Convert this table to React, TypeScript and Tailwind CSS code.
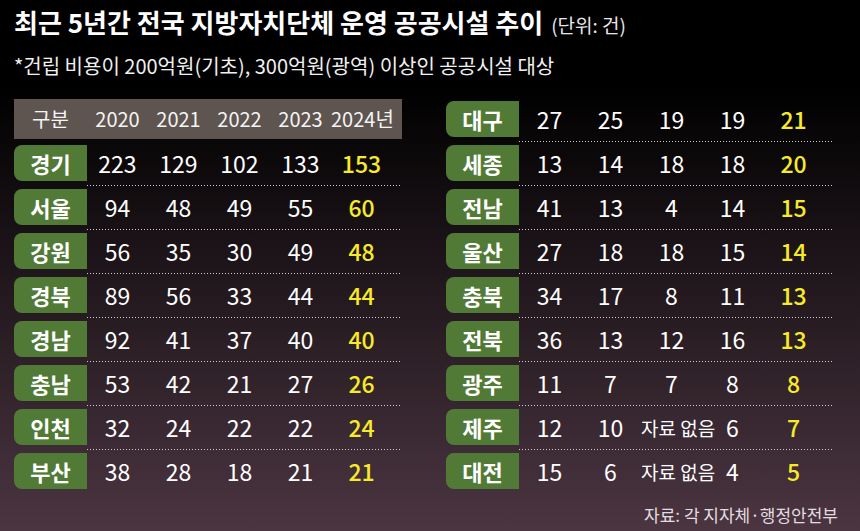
import React from 'react';

type Row = { name: string; values: (number | string)[] };

const leftRows: Row[] = [
  { name: '경기', values: [223, 129, 102, 133, 153] },
  { name: '서울', values: [94, 48, 49, 55, 60] },
  { name: '강원', values: [56, 35, 30, 49, 48] },
  { name: '경북', values: [89, 56, 33, 44, 44] },
  { name: '경남', values: [92, 41, 37, 40, 40] },
  { name: '충남', values: [53, 42, 21, 27, 26] },
  { name: '인천', values: [32, 24, 22, 22, 24] },
  { name: '부산', values: [38, 28, 18, 21, 21] },
];

const rightRows: Row[] = [
  { name: '대구', values: [27, 25, 19, 19, 21] },
  { name: '세종', values: [13, 14, 18, 18, 20] },
  { name: '전남', values: [41, 13, 4, 14, 15] },
  { name: '울산', values: [27, 18, 18, 15, 14] },
  { name: '충북', values: [34, 17, 8, 11, 13] },
  { name: '전북', values: [36, 13, 12, 16, 13] },
  { name: '광주', values: [11, 7, 7, 8, 8] },
  { name: '제주', values: [12, 10, '자료 없음', 6, 7] },
  { name: '대전', values: [15, 6, '자료 없음', 4, 5] },
];

const years = ['2020', '2021', '2022', '2023', '2024년'];

const Dots = () => (
  <div className="h-2 flex items-center pl-[73px]">
    <div className="h-px flex-1 bg-[linear-gradient(to_right,#d2ccce_1px,transparent_1px)] bg-[length:3px_1px] bg-repeat-x" />
  </div>
);

const DataRow: React.FC<{ row: Row }> = ({ row }) => (
  <div className="h-9 grid grid-cols-[73px_repeat(5,61px)] items-center">
    <div className="h-9 rounded-l-lg bg-[#527a37] flex items-center justify-center text-[22px] font-bold text-white leading-none">
      {row.name}
    </div>
    {row.values.map((v, i) => {
      const last = i === row.values.length - 1;
      const isText = typeof v === 'string';
      return (
        <div
          key={i}
          className={
            'text-center leading-none whitespace-nowrap ' +
            (isText
              ? 'text-[19px] text-white'
              : last
              ? 'text-[23px] font-medium text-[#f7ea2a]'
              : 'text-[23px] text-white')
          }
        >
          {v}
        </div>
      );
    })}
  </div>
);

export default function App() {
  return (
    <div
      className="w-[860px] h-[531px] overflow-hidden bg-[linear-gradient(to_bottom,#000_16%,#4b3541_100%)] text-white px-[14px] pt-[6px]"
      style={{ fontFamily: '"Noto Sans CJK KR", "Noto Sans", sans-serif' }}
    >
      <div className="flex items-baseline gap-2 h-8 whitespace-nowrap">
        <span className="text-[26px] font-bold leading-8">최근 5년간 전국 지방자치단체 운영 공공시설 추이</span>
        <span className="text-[19px] text-[#e6e6e6]">(단위: 건)</span>
      </div>
      <div className="mt-[18px] text-[20px] text-[#f0f0f0] leading-none whitespace-nowrap">
        *건립 비용이 200억원(기초), 300억원(광역) 이상인 공공시설 대상
      </div>

      <div className="flex mt-[25px]">
        <div className="w-[388px] flex flex-col">
          <div className="h-10 -mt-0.5 bg-[#5f5550] grid grid-cols-[73px_repeat(5,61px)] items-center text-[20px] font-normal text-[#f4f4f4] leading-none">
            <div className="text-center">구분</div>
            {years.map((y) => (
              <div key={y} className="text-center whitespace-nowrap">
                {y}
              </div>
            ))}
          </div>
          <div className="h-1.5" />
          {leftRows.map((r, i) => (
            <React.Fragment key={r.name}>
              {i > 0 && <Dots />}
              <DataRow row={r} />
            </React.Fragment>
          ))}
        </div>

        <div className="w-[387px] ml-[44px] flex flex-col">
          {rightRows.map((r, i) => (
            <React.Fragment key={r.name}>
              {i > 0 && <Dots />}
              <DataRow row={r} />
            </React.Fragment>
          ))}
        </div>
      </div>

      <div className="mt-[17px] pr-[8px] text-right text-[17px] text-[#e2dde0] leading-none">
        자료: 각 지자체·행정안전부
      </div>
    </div>
  );
}
